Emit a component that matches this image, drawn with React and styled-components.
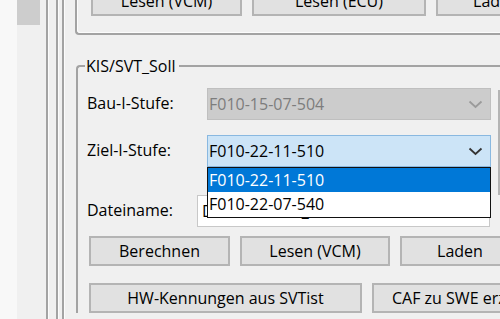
import styled, { createGlobalStyle } from 'styled-components';

const GlobalStyle = createGlobalStyle`
  html, body {
    margin: 0;
    padding: 0;
    background: #f0f0f0;
    overflow: hidden;
  }
  body {
    font-family: "Open Sans", "Liberation Sans", sans-serif;
    font-size: 16px;
    color: #000;
  }
`;

function Chevron({ disabled }) {
  return (
    <svg width="15" height="9" viewBox="0 0 15 9">
      <path
        d="M1.5 1.5 L7.5 7 L13.5 1.5"
        fill="none"
        stroke={disabled ? '#9a9a9a' : '#333'}
        strokeWidth="1.8"
      />
    </svg>
  );
}

function App() {
  return (
    <>
      <GlobalStyle />
      <Window>
        <Gutter />
        <ScrollBar>
          <Thumb />
        </ScrollBar>
        <Rail $gap={6} />
        <Rail $gap={8} />
        <Rail $gap={4} />
        <Content>
          <UpperGroup>
            <ButtonRow $top={-14}>
              <Button $width={151}>Lesen (VCM)</Button>
              <Button $width={174}>Lesen (ECU)</Button>
              <Button $width={120}>Laden</Button>
            </ButtonRow>
          </UpperGroup>

          <GroupBox>
            <Legend>KIS/SVT_Soll</Legend>
            <FieldGrid>
              <Label>Bau-I-Stufe:</Label>
              <Combo $disabled>
                <span>F010-15-07-504</span>
                <Chevron disabled />
              </Combo>
              <SideBox />
              <Label>Ziel-I-Stufe:</Label>
              <ComboWrap>
                <Combo $focused>
                  <span>F010-22-11-510</span>
                  <Chevron />
                </Combo>
                <DropList>
                  <Option $selected>F010-22-11-510</Option>
                  <Option>F010-22-07-540</Option>
                </DropList>
              </ComboWrap>
            </FieldGrid>

            <FileRow>
              <Label $width={110}>Dateiname:</Label>
              <TextBox>D:\Daten\SVT_Soll.xml</TextBox>
            </FileRow>

            <ButtonRow $top={9}>
              <Button $width={141}>Berechnen</Button>
              <Button $width={150}>Lesen (VCM)</Button>
              <Button $width={120}>Laden</Button>
            </ButtonRow>
            <ButtonRow $top={17}>
              <Button $width={273}>HW-Kennungen aus SVTist</Button>
              <Button $width={200}>CAF zu SWE erzeugen</Button>
            </ButtonRow>
          </GroupBox>
        </Content>
      </Window>
    </>
  );
}

export default App;

const Window = styled.div`
  display: flex;
  width: 500px;
  height: 319px;
  overflow: hidden;
  background: #f0f0f0;
`;

const Gutter = styled.div`
  flex: 0 0 17px;
  background: #f8f8f8;
`;

const ScrollBar = styled.div`
  flex: 0 0 23px;
  background: #f0f0f0;
`;

const Thumb = styled.div`
  height: 25px;
  background: #cdcdcd;
`;

const Rail = styled.div`
  flex: 0 0 2px;
  margin-left: ${(p) => p.$gap}px;
  background: #a3a3a3;
  box-shadow: 1px 0 0 #fcfcfc;
`;

const Content = styled.div`
  flex: 1;
  min-width: 0;
  display: flex;
  flex-direction: column;
`;

const UpperGroup = styled.div`
  height: 33px;
  margin-left: 11px;
  border-left: 2px solid #a3a3a3;
  border-bottom: 2px solid #a3a3a3;
  border-bottom-left-radius: 4px;
  box-shadow: inset 1px -1px 0 #fcfcfc;
  padding-left: 12px;
`;

const ButtonRow = styled.div`
  display: flex;
  gap: 10px;
  margin-top: ${(p) => p.$top}px;
  margin-left: 2px;
`;

const Button = styled.div`
  flex: 0 0 ${(p) => p.$width}px;
  box-sizing: border-box;
  height: 30px;
  display: flex;
  align-items: center;
  justify-content: center;
  background: #e1e1e1;
  border: 2px solid #b4b4b4;
  white-space: nowrap;
  overflow: hidden;
`;

const GroupBox = styled.fieldset`
  margin: 21px 0 0 12px;
  padding: 12px 0 0 9px;
  border: none;
  border-top: 2px solid #a3a3a3;
  border-left: 2px solid #a3a3a3;
  border-top-left-radius: 4px;
  min-width: 0;
`;

const Legend = styled.legend`
  line-height: 20px;
  padding: 0 3px 0 1px;
  margin-left: -2px;
`;

const FieldGrid = styled.div`
  display: grid;
  grid-template-columns: 113px 284px 60px;
  grid-template-rows: 32px 32px;
  row-gap: 15px;
  column-gap: 7px;
  align-items: center;
`;

const Label = styled.div`
  ${(p) => p.$width && `flex: 0 0 ${p.$width}px;`}
  white-space: nowrap;
  margin-top: -2px;
`;

const Combo = styled.div`
  box-sizing: border-box;
  height: 32px;
  display: flex;
  align-items: center;
  justify-content: space-between;
  padding: 0 7px 0 1px;
  background: ${(p) => (p.$disabled ? '#cccccc' : p.$focused ? '#cce4f7' : '#fff')};
  border: 1px solid ${(p) => (p.$disabled ? '#bfbfbf' : p.$focused ? '#89b8e0' : '#7a7a7a')};
  color: ${(p) => (p.$disabled ? '#7d7d7d' : '#000')};
`;

const ComboWrap = styled.div`
  position: relative;
`;

const SideBox = styled.div`
  grid-column: 3;
  grid-row: 1 / span 2;
  align-self: stretch;
  margin: 2px 0 -28px;
  border: 2px solid #b4b4b4;
  border-right: none;
  background: #f4f4f4;
`;

const DropList = styled.div`
  position: absolute;
  top: 100%;
  left: 0;
  right: 0;
  height: 51px;
  box-sizing: border-box;
  border: 1.5px solid #111;
  background: #fff;
  z-index: 2;
`;

const Option = styled.div`
  height: 24px;
  line-height: 24px;
  padding-left: 1px;
  background: ${(p) => (p.$selected ? '#0078d7' : '#fff')};
  color: ${(p) => (p.$selected ? '#fff' : '#000')};
`;

const FileRow = styled.div`
  display: flex;
  align-items: center;
  margin-top: 28px;
`;

const TextBox = styled.div`
  box-sizing: border-box;
  width: 293px;
  height: 32px;
  display: flex;
  align-items: center;
  padding-left: 4px;
  background: #fff;
  border: 1px solid #c8c8c8;
  white-space: nowrap;
  overflow: hidden;
`;
